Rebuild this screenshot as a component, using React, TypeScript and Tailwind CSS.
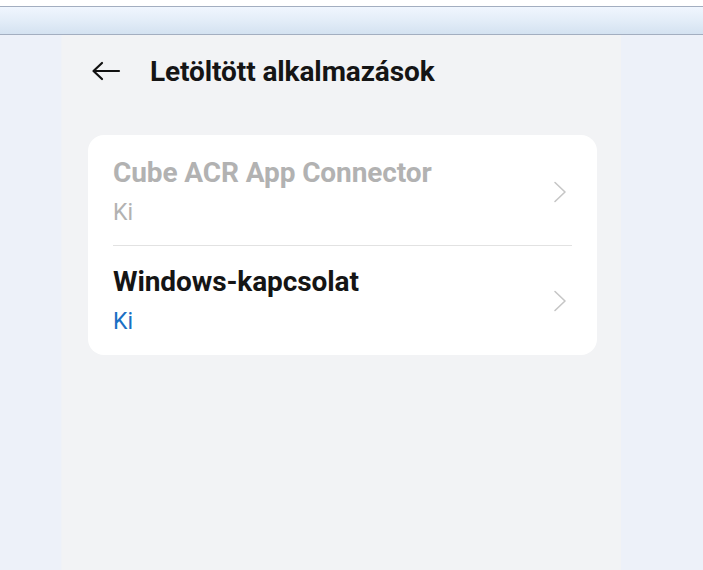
import React from "react";

function Chevron() {
  return (
    <svg width="14" height="22" viewBox="0 0 14 22" fill="none" className="shrink-0">
      <path d="M2 1.5 L12 11 L2 20.5" stroke="#c6c6c6" strokeWidth="1.6" strokeLinecap="round" strokeLinejoin="round" />
    </svg>
  );
}

function Row({ title, sub, disabled, h }: { title: string; sub: string; disabled?: boolean; h: string }) {
  return (
    <div className={"flex items-center pl-[25px] pr-[30px] " + h}>
      <div className="flex-1 flex flex-col">
        <div
          className={
            disabled
              ? "text-[28px] leading-[32px] font-bold text-[#b2b2b2] tracking-[-0.1px]"
              : "text-[28px] leading-[32px] font-bold text-[#151515] tracking-[-0.1px]"
          }
        >
          {title}
        </div>
        <div
          className={
            disabled
              ? "text-[23px] leading-[28px] mt-[10px] text-[#b2b2b2]"
              : "text-[23px] leading-[28px] mt-[10px] text-[#1a6fc4]"
          }
        >
          {sub}
        </div>
      </div>
      <Chevron />
    </div>
  );
}

export default function App() {
  return (
    <div
      className="w-[703px] h-[570px] overflow-hidden flex flex-col bg-[#edf1f9]"
      style={{ fontFamily: "Roboto, 'Noto Sans', sans-serif" }}
    >
      <div className="h-[6px] bg-white shrink-0" />
      <div className="h-[29px] shrink-0 border-t border-b border-[#a3aec0] bg-gradient-to-b from-[#f0f6fe] via-[#e3edf8] to-[#d4e2f1]" />
      <div className="flex-1 flex">
        <div className="w-[61px] bg-[#edf1f9]" />
        <div className="w-[1px] bg-[#f0f2f6]" />
        <div className="w-[559px] bg-[#f2f3f5] flex flex-col">
          <div className="flex items-center h-[74px] pl-[29px]">
            <svg width="30" height="20" viewBox="0 0 30 20" fill="none" className="mb-[3px]">
              <path d="M28 10 H3 M11 2 L2.5 10 L11 18" stroke="#111" strokeWidth="2.2" strokeLinecap="round" strokeLinejoin="round" />
            </svg>
            <div className="ml-[29px] text-[28px] leading-[32px] font-bold text-[#151515] tracking-[-0.1px]">
              Letöltött alkalmazások
            </div>
          </div>
          <div className="mt-[26px] ml-[26px] w-[509px] bg-white rounded-[16px] flex flex-col pt-[3px]">
            <Row title="Cube ACR App Connector" sub="Ki" disabled h="h-[107px]" />
            <div className="h-[1px] bg-[#e2e2e2] ml-[25px] mr-[25px]" />
            <Row title="Windows-kapcsolat" sub="Ki" h="h-[109px]" />
          </div>
        </div>
        <div className="flex-1 bg-[#edf1f9]" />
      </div>
    </div>
  );
}
